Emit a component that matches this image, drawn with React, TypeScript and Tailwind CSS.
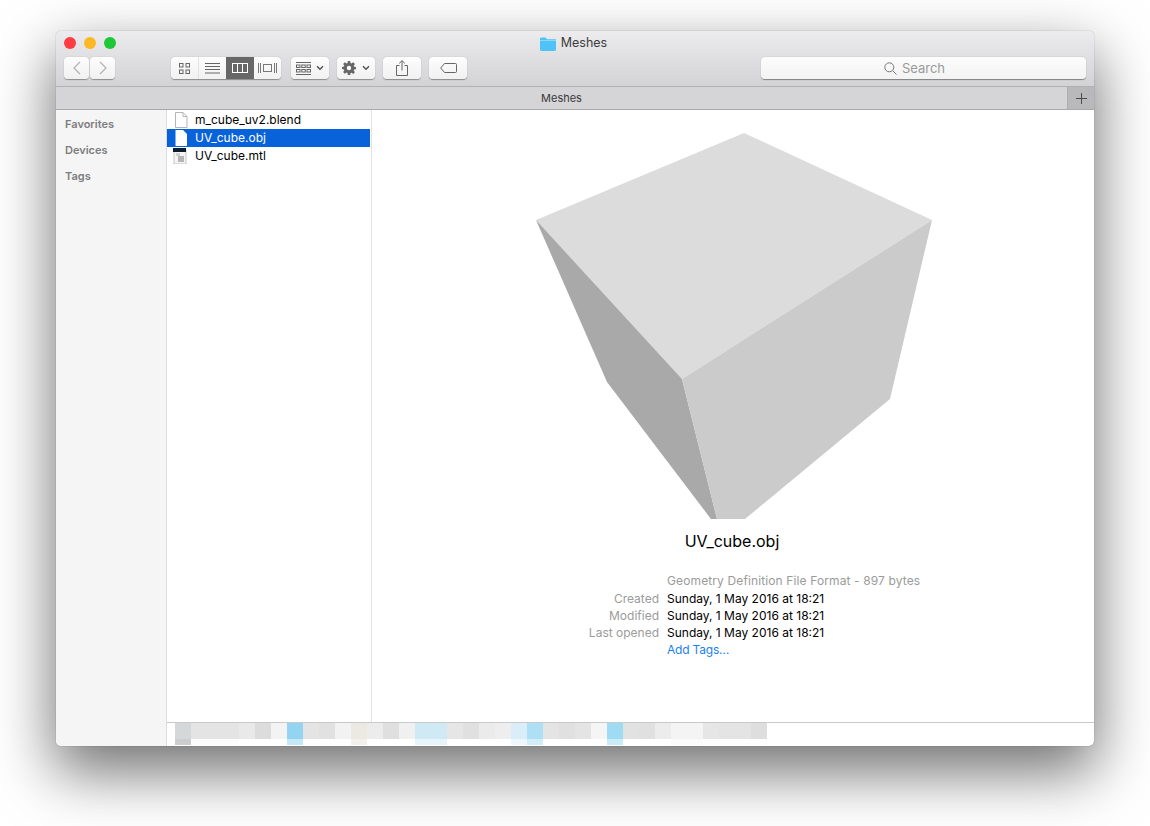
import React from "react";

const upper = [
  "w-4 bg-[#d5d8d8]", "w-12 bg-[#e4e4e4]", "w-4 bg-[#e9e9e9]", "w-4 bg-[#dcdcdc]", "w-4 bg-[#f3f3f3]",
  "w-4 bg-[#93d4f0]", "w-4 bg-[#e4e4e4]", "w-4 bg-[#e1e1e1]", "w-4 bg-[#f2f2f2]", "w-4 bg-[#ece8e2]",
  "w-4 bg-[#ececec]", "w-4 bg-[#dfdfdf]", "w-4 bg-[#f0f0f0]", "w-8 bg-[#cfeaf5]", "w-4 bg-[#e6e6e6]",
  "w-4 bg-[#e0e0e0]", "w-4 bg-[#ebebeb]", "w-4 bg-[#eeeeee]", "w-4 bg-[#d9eef8]", "w-4 bg-[#aee0f5]",
  "w-4 bg-[#e4e4e4]", "w-4 bg-[#e0e0e0]", "w-4 bg-[#e4e4e4]", "w-4 bg-[#f5f5f5]", "w-4 bg-[#9ddcf3]",
  "w-4 bg-[#e2e2e2]", "w-4 bg-[#e0e0e0]", "w-4 bg-[#ececec]", "w-8 bg-[#f4f4f4]", "w-4 bg-[#e6e6e6]",
  "w-8 bg-[#e4e4e4]", "w-4 bg-[#dedede]",
];
const lower = [
  "w-4 bg-[#cdcdcd]", "w-12 bg-[#fcfcfc]", "w-12 bg-white", "w-4 bg-[#c3e8f7]", "w-12 bg-[#fefefe]",
  "w-4 bg-[#f3f0ec]", "w-12 bg-white", "w-8 bg-[#e7f5fa]", "w-12 bg-white", "w-4 bg-white", "w-4 bg-[#eef8fc]",
  "w-4 bg-[#cfeef9]", "w-12 bg-white", "w-4 bg-white", "w-4 bg-[#c8ecf8]", "w-12 bg-white", "w-8 bg-[#fbfbfb]", "w-16 bg-[#fdfdfd]",
];

const btn = "flex h-[22px] items-center justify-center rounded-[4px] bg-gradient-to-b from-[#fdfdfd] to-[#f1f1f1] shadow-[0_0.5px_1px_rgba(0,0,0,0.35)]";

function Chevron() {
  return (
    <svg width="8" height="6" viewBox="0 0 8 6" fill="none" stroke="#555" strokeWidth="1.5">
      <path d="M1 1.2 4 4.2 7 1.2" />
    </svg>
  );
}

function Row({ label, value }: { label: string; value: string }) {
  return (
    <div className="flex h-[17px] items-center">
      <span className="w-[95px] pr-2 text-right text-[#9b9b9b]">{label}</span>
      <span className="text-black">{value}</span>
    </div>
  );
}

export default function App() {
  return (
    <div className="h-[826px] w-[1150px] overflow-hidden bg-white pl-[56px] pt-[31px] font-['Inter','Liberation_Sans',sans-serif] text-[12px]">
      <div className="flex h-[715px] w-[1038px] flex-col overflow-hidden rounded-[5px] bg-white shadow-[0_24px_60px_2px_rgba(0,0,0,0.56),0_0_1px_rgba(0,0,0,0.5)]">
        {/* toolbar */}
        <div className="flex h-[56px] flex-col border-b border-[#b1b0b2] bg-gradient-to-b from-[#ecebed] to-[#d3d2d4]">
          <div className="relative flex h-[26px] items-center justify-center pb-[1px] pr-[3px]">
            <div className="absolute left-[8px] top-[6px] flex gap-[8px]">
              <span className="h-3 w-3 rounded-full bg-[#fc3d44]" />
              <span className="h-3 w-3 rounded-full bg-[#fdb924]" />
              <span className="h-3 w-3 rounded-full bg-[#1dc736]" />
            </div>
            <svg width="16" height="14" viewBox="0 0 16 14" className="mr-[5px]">
              <path d="M0 2.2C0 1.2.6.6 1.5.6h3.600c.6 0 .9.2 1.200.6l.7 1H16V12.600c0 .8-.5 1.400-1.400 1.400H1.400C.5 14 0 13.400 0 12.600z" fill="#4fc3f7" />
              <rect x="0" y="3" width="16" height="1" fill="#8ad8fa" />
            </svg>
            <span className="text-[12.5px] leading-none text-[#3d3d3d]">Meshes</span>
          </div>
          <div className="flex h-[22px] items-center pl-[8px] pr-[8px]">
            <div className={`${btn} w-[25px]`}>
              <svg width="10" height="14" viewBox="0 0 10 14" fill="none" stroke="#b4b4b4" strokeWidth="1.3"><path d="M8 1 2 7l6 6" /></svg>
            </div>
            <div className={`${btn} ml-px w-[25px]`}>
              <svg width="10" height="14" viewBox="0 0 10 14" fill="none" stroke="#b4b4b4" strokeWidth="1.3"><path d="M2 1l6 6-6 6" /></svg>
            </div>
            <div className={`${btn} ml-[56px] w-[110px] justify-start overflow-hidden`}>
              <div className="flex h-full w-[28px] items-center justify-center border-r border-[#e2e2e2]">
                <svg width="11" height="11" viewBox="0 0 11 11" fill="none" stroke="#666" strokeWidth="1">
                  <rect x=".5" y=".5" width="3.5" height="3.5" /><rect x="7" y=".5" width="3.5" height="3.5" />
                  <rect x=".5" y="7" width="3.5" height="3.5" /><rect x="7" y="7" width="3.5" height="3.5" />
                </svg>
              </div>
              <div className="flex h-full w-[27px] items-center justify-center">
                <svg width="15" height="11" viewBox="0 0 15 11" stroke="#666" strokeWidth="1"><path d="M0 .5h15M0 3.5h15M0 6.5h15M0 10h15" /></svg>
              </div>
              <div className="flex h-[24px] w-[28px] items-center justify-center bg-[#676767]">
                <svg width="16" height="10" viewBox="0 0 16 10" fill="none" stroke="#fff" strokeWidth="1"><rect x=".5" y=".5" width="15" height="9" /><path d="M5.500 0v10M10.500 0v10" /></svg>
              </div>
              <div className="flex h-full w-[27px] items-center justify-center">
                <svg width="19" height="10" viewBox="0 0 19 10" fill="none" stroke="#777" strokeWidth="1"><rect x="5.500" y="1.500" width="8" height="7" /><path d="M.5 0v10M2.500 0v10M16.500 0v10M18.500 0v10" /></svg>
              </div>
            </div>
            <div className={`${btn} ml-[10px] w-[38px] gap-[5px]`}>
              <svg width="15" height="13" viewBox="0 0 15 13" fill="none" stroke="#666" strokeWidth="1">
                <path d="M0 .5h15M0 12.500h15" />
                <rect x=".5" y="3" width="3.500" height="2.500" /><rect x="5.750" y="3" width="3.500" height="2.500" /><rect x="11" y="3" width="3.500" height="2.500" />
                <rect x=".5" y="7.500" width="3.500" height="2.500" /><rect x="5.750" y="7.500" width="3.500" height="2.500" /><rect x="11" y="7.500" width="3.500" height="2.500" />
              </svg>
              <Chevron />
            </div>
            <div className={`${btn} ml-[8px] w-[38px] gap-[6px]`}>
              <svg width="14" height="14" viewBox="0 0 14 14">
                <path fill="#666" fillRule="evenodd" d="M5.800 0h2.400l.3 2 1 .4L11.200 1.300 12.900 3l-1.100 1.700.4 1 1.800.3v2.200l-1.900.4-.4 1 1.200 1.600-1.700 1.700-1.600-1.200-1 .4-.4 1.800H5.800l-.3-1.900-1-.4-1.700 1.200L1.100 11l1.200-1.600-.4-1L0 8.100V5.900l1.900-.3.4-1L1.100 3l1.700-1.700 1.700 1.100 1-.4zM7 4.800a2.200 2.200 0 1 0 0 4.400 2.200 2.200 0 0 0 0-4.400z" />
              </svg>
              <Chevron />
            </div>
            <div className={`${btn} ml-[8px] w-[38px]`}>
              <svg width="12" height="16" viewBox="0 0 12 16" fill="none" stroke="#666" strokeWidth="1"><path d="M3.500 5.500H.5v10h11v-10h-3M6 10.500V.8M3.200 3.400 6 .7l2.800 2.700" /></svg>
            </div>
            <div className={`${btn} ml-[8px] w-[38px]`}>
              <svg width="17" height="10" viewBox="0 0 17 10" fill="none" stroke="#666" strokeWidth="1"><path d="M4.500.5h11a1 1 0 0 1 1 1v7a1 1 0 0 1-1 1h-11L.7 5z" /></svg>
            </div>
            <div className="ml-auto flex h-[22px] w-[325px] items-center justify-center gap-[5px] rounded-[4px] bg-gradient-to-b from-[#fcfcfc] to-[#f3f3f3] pr-[18px] text-[13px] text-[#9a9a9a] shadow-[0_0.5px_1px_rgba(0,0,0,0.4)]">
              <svg width="13" height="13" viewBox="0 0 13 13" fill="none" stroke="#777" strokeWidth="1"><circle cx="5.300" cy="5.300" r="4.500" /><path d="m8.600 8.600 3.900 3.900" /></svg>
              <span className="pt-[2px]">Search</span>
            </div>
          </div>
        </div>

        {/* tab bar */}
        <div className="flex h-[23px] border-b border-[#a8a7a9] bg-[#d5d4d6]">
          <div className="flex flex-1 items-center justify-center text-[11px] text-[#3a3a3a]">Meshes</div>
          <div className="flex w-[27px] items-center justify-center border-l border-[#acabad] bg-[#b9b8ba]">
            <svg width="11" height="11" viewBox="0 0 11 11" stroke="#4a4a4a" strokeWidth="1"><path d="M5.500 0v11M0 5.500h11" /></svg>
          </div>
        </div>

        {/* body */}
        <div className="flex min-h-0 flex-1">
          <aside className="flex w-[111px] flex-col gap-[11px] border-r border-[#dcdcdc] bg-[#f5f5f5] pl-[9px] pt-[7px] text-[11px] font-semibold leading-[15px] text-[#7d7d7d]">
            <div>Favorites</div>
            <div>Devices</div>
            <div>Tags</div>
          </aside>
          <div className="flex min-w-0 flex-1 flex-col">
            <div className="flex min-h-0 flex-1">
              <div className="w-[205px] border-r border-[#e2e2e2] pr-px pt-[1px]">
                <div className="flex h-[18px] items-center text-black">
                  <svg width="14" height="16" viewBox="0 0 14 16" className="ml-[7px] mr-[7px]" fill="#fff" stroke="#b5b5b5"><path d="M1.500.5h7.500l4 4v11h-11.500z" /><path d="M9 .5v4h4" fill="none" /></svg>
                  <span>m_cube_uv2.blend</span>
                </div>
                <div className="flex h-[18px] items-center bg-[#0862d9] text-white">
                  <svg width="14" height="16" viewBox="0 0 14 16" className="ml-[7px] mr-[7px]" fill="#fff"><path d="M1.500 0h7.500l4 4v12h-11.500z" /></svg>
                  <span>UV_cube.obj</span>
                </div>
                <div className="flex h-[18px] items-center text-black">
                  <svg width="15" height="16" viewBox="0 0 15 16" className="ml-[6px] mr-[7px]">
                    <rect x="1" y="3" width="12" height="13" fill="#f4f4f4" stroke="#c4c4c4" />
                    <rect x="0" y="0" width="13" height="4" fill="#0d1b2e" />
                    <rect x="5" y="8" width="6" height="6" fill="#b5b5b5" />
                    <rect x="3" y="5" width="4" height="3" fill="#d0d0d0" />
                  </svg>
                  <span>UV_cube.mtl</span>
                </div>
              </div>
              <div className="flex min-w-0 flex-1 flex-col items-center pt-[23px]">
                <svg width="396" height="386" viewBox="536 133 396 386" className="translate-x-[1px]">
                  <polygon points="744,133 932,220 682,379 536,220" fill="#dcdcdc" />
                  <polygon points="536,220 682,379 717,519 711,519 607,382" fill="#a9a9a9" />
                  <polygon points="682,379 932,220 890,399 745,519 717,519" fill="#cbcbcb" />
                </svg>
                <div className="mr-[2px] mt-[11px] text-[16px] leading-[22px] text-black">UV_cube.obj</div>
                <div className="ml-[28px] mt-[20px] w-[350px] leading-[17px]">
                  <div className="h-[18px] pl-[95px] tracking-[0.12px] text-[#9b9b9b]">Geometry Definition File Format - 897 bytes</div>
                  <Row label="Created" value="Sunday, 1 May 2016 at 18:21" />
                  <Row label="Modified" value="Sunday, 1 May 2016 at 18:21" />
                  <Row label="Last opened" value="Sunday, 1 May 2016 at 18:21" />
                  <div className="h-[17px] pl-[95px] tracking-[-0.2px] text-[#1b7ff0]">Add Tags…</div>
                </div>
              </div>
            </div>
            {/* path bar, pixelated */}
            <div className="h-[24px] border-t border-[#c9c9c9] pl-[8px]">
              <div className="flex h-[16px]">
                {upper.map((c, i) => <div key={i} className={c} />)}
              </div>
              <div className="flex h-[6px]">
                {lower.map((c, i) => <div key={i} className={c} />)}
              </div>
            </div>
          </div>
        </div>
      </div>
    </div>
  );
}
